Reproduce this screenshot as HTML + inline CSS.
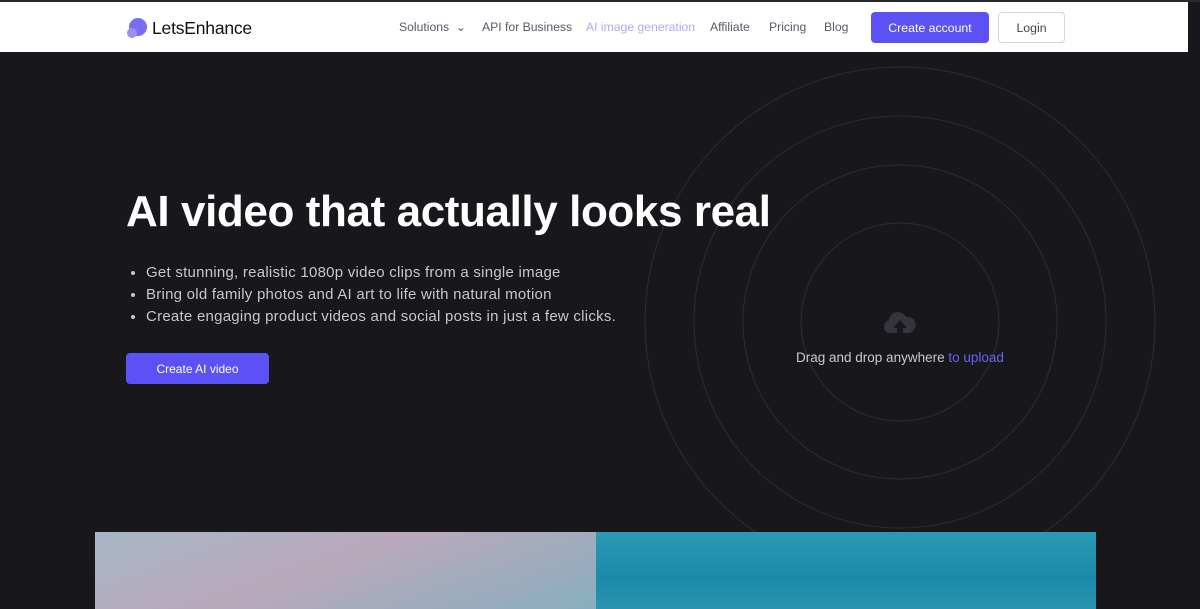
<!DOCTYPE html>
<html><head><style>
*{margin:0;padding:0;box-sizing:border-box}
body{width:1200px;height:609px;overflow:hidden;background:#17171c;font-family:"Liberation Sans",sans-serif;position:relative}
.nav{position:absolute;top:2px;left:0;width:1188px;height:50px;background:#fff}
.topbar{position:absolute;top:0;left:0;width:1200px;height:2px;background:#2a2830}
.logo{position:absolute;left:126px;top:15px;display:flex;align-items:center;font-size:17.5px;color:#111;font-weight:500;letter-spacing:-0.2px}
.nav a{position:absolute;top:18px;font-size:12.2px;color:#555a66;text-decoration:none}
.btn{position:absolute;top:10px;height:31px;border-radius:4px;font-size:12.3px;display:flex;align-items:center;justify-content:center}
h1{position:absolute;left:126px;top:187px;font-size:44px;color:#fff;font-weight:700;letter-spacing:-0.4px}
ul{position:absolute;left:146px;top:262px;color:#c6c8d0;font-size:15px;line-height:22px;letter-spacing:0.25px}
.cta{position:absolute;left:126px;top:353px;width:143px;height:31px;background:#5b51f4;color:#fff;border-radius:4px;font-size:12px;display:flex;align-items:center;justify-content:center}
svg.c{position:absolute;left:0;top:0}
.dd{position:absolute;left:796px;top:350px;font-size:13.5px;color:#c8cad2}
</style></head><body>
<svg class="c" width="1200" height="609"><g fill="none" stroke="#2c2d33" stroke-width="1"><circle cx="900" cy="322" r="99"/><circle cx="900" cy="322" r="157"/><circle cx="900" cy="322" r="206"/><circle cx="900" cy="322" r="255"/></g>
<path d="M888 333a7 7 0 0 1 1-13a9 9 0 0 1 17-3a7 7 0 0 1 3 16h-6v-5h4l-7-8-7 8h4v5z" fill="#34353d"/></svg>
<div class="topbar"></div>
<div class="nav">
<div class="logo"><svg width="22" height="22" viewBox="0 0 22 22"><circle cx="12" cy="10" r="9" fill="#7b6cf6"/><circle cx="6" cy="16" r="5" fill="#9b8ff8"/></svg><span style="margin-left:4px">LetsEnhance</span></div>
<a style="left:399px">Solutions&nbsp; ⌄</a>
<a style="left:482px">API for Business</a>
<a style="left:586px;color:#b3a8f8">AI image generation</a>
<a style="left:710px">Affiliate</a>
<a style="left:769px">Pricing</a>
<a style="left:824px">Blog</a>
<div class="btn" style="left:871px;width:118px;background:#5b51f4;color:#fff">Create account</div>
<div class="btn" style="left:998px;width:67px;border:1px solid #d4d6dc;color:#444">Login</div>
</div>
<h1>AI video that actually looks real</h1>
<ul><li>Get stunning, realistic 1080p video clips from a single image</li><li>Bring old family photos and AI art to life with natural motion</li><li>Create engaging product videos and social posts in just a few clicks.</li></ul>
<div class="cta">Create AI video</div>
<div class="dd">Drag and drop anywhere <span style="color:#6b61f5">to upload</span></div>
<div style="position:absolute;left:95px;top:532px;width:501px;height:77px;background:linear-gradient(160deg,#a7b6c7,#b9a9bb 45%,#88aebf)"></div>
<div style="position:absolute;left:596px;top:532px;width:500px;height:77px;background:linear-gradient(180deg,#2a9ab5,#1a8aa8 60%,#2a93b0)"></div>
</body></html>
